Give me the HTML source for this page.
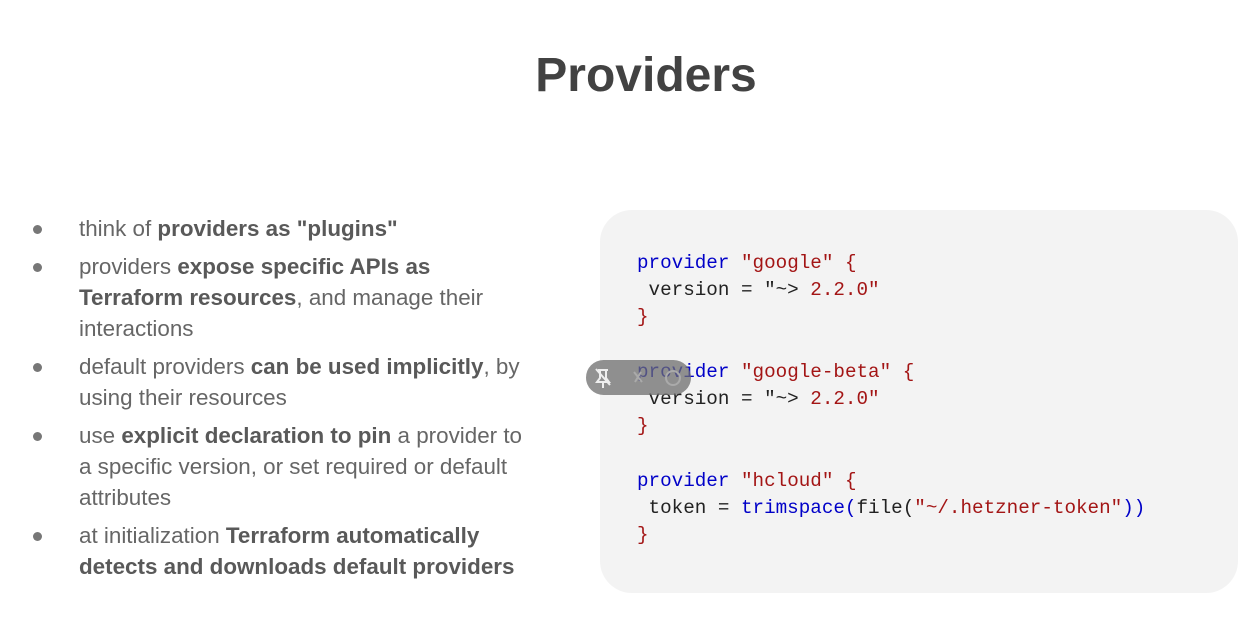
<!DOCTYPE html>
<html><head><meta charset="utf-8"><style>
body{margin:0;width:1242px;height:617px;background:#fff;position:relative;overflow:hidden;font-family:"Liberation Sans",sans-serif}
h1{position:absolute;top:48px;left:0;width:1292px;text-align:center;margin:0;font-size:48px;font-weight:bold;color:#424242}
.l{position:absolute;left:79px;top:213px;width:445px;font-size:22.4px;line-height:31px;color:#666;margin:0;padding:0;list-style:none}
.l li{position:relative;margin-bottom:7px}
.l li:before{content:"";position:absolute;left:-46px;top:12px;width:9px;height:9px;border-radius:50%;background:#777}
.l b{color:#595959}
.box{position:absolute;left:600px;top:210px;width:638px;height:383px;background:#f3f3f3;border-radius:32px}
pre{position:absolute;left:637px;top:250px;margin:0;font-family:"Liberation Mono",monospace;font-size:19.25px;line-height:27.2px;color:#222}
.k{color:#0000c8}.s{color:#a31515}
.pill{position:absolute;left:586px;top:360px;width:105px;height:35px;border-radius:18px;background:rgba(110,110,110,.75)}
</style></head><body>
<h1>Providers</h1>
<ul class="l">
<li>think of <b>providers as "plugins"</b></li>
<li>providers <b>expose specific APIs as Terraform resources</b>, and manage their interactions</li>
<li>default providers <b>can be used implicitly</b>, by using their resources</li>
<li>use <b>explicit declaration to pin</b> a provider to a specific version, or set required or default attributes</li>
<li>at initialization <b>Terraform automatically detects and downloads default providers</b></li>
</ul>
<div class="box"></div>
<pre><span class="k">provider</span> <span class="s">"google" {</span>
 version = "~&gt; <span class="s">2.2.0"</span>
<span class="s">}</span>

<span class="k">provider</span> <span class="s">"google-beta" {</span>
 version = "~&gt; <span class="s">2.2.0"</span>
<span class="s">}</span>

<span class="k">provider</span> <span class="s">"hcloud" {</span>
 token = <span class="k">trimspace(</span>file(<span class="s">"~/.hetzner-token"</span><span class="k">))</span>
<span class="s">}</span></pre>
<div class="pill"><svg width="105" height="35" style="position:absolute;left:0;top:0"><g fill="none" stroke="#eee" stroke-width="2"><path d="M12 10h10M14 10v8l-3 4h12l-3-4v-8M17 22v6M10 9l14 16"/><path d="M48 12l8 10M55 12l-6 10" stroke="#aaa"/><circle cx="87" cy="18" r="7" stroke="#aaa"/></g></svg></div>
</body></html>
